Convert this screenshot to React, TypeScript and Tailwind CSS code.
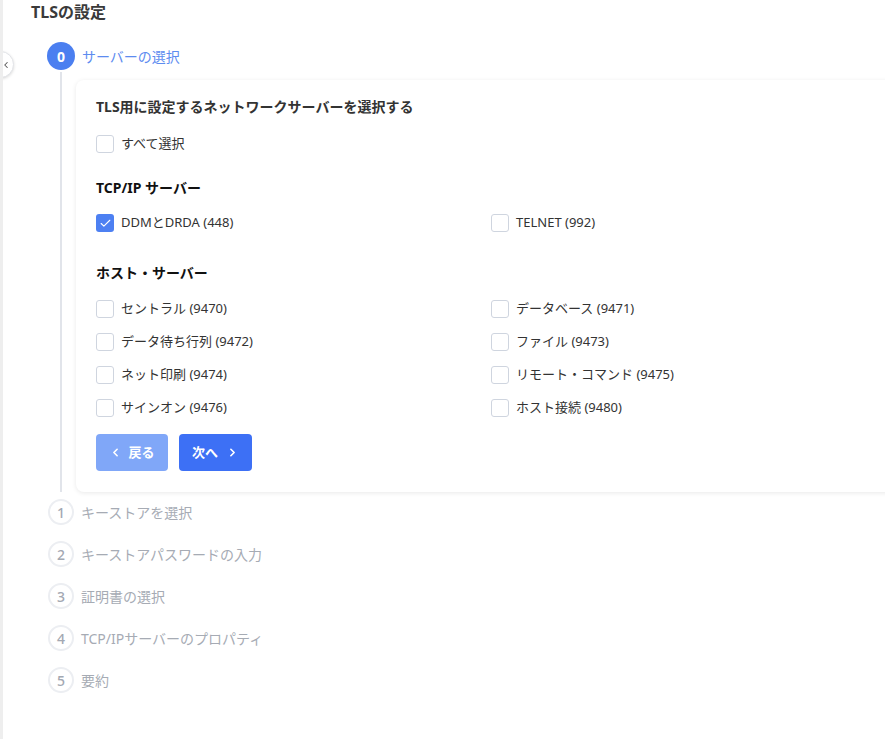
import { Check, ChevronLeft, ChevronRight } from "lucide-react";

const font = { fontFamily: '"Noto Sans", "Noto Sans CJK JP", sans-serif' };

const hostServers: [string, string][] = [
  ["セントラル (9470)", "データベース (9471)"],
  ["データ待ち行列 (9472)", "ファイル (9473)"],
  ["ネット印刷 (9474)", "リモート・コマンド (9475)"],
  ["サインオン (9476)", "ホスト接続 (9480)"],
];

const steps = [
  { n: 1, label: "キーストアを選択" },
  { n: 2, label: "キーストアパスワードの入力" },
  { n: 3, label: "証明書の選択" },
  { n: 4, label: "TCP/IPサーバーのプロパティ" },
  { n: 5, label: "要約" },
];

function Box({ label, checked = false }: { label: string; checked?: boolean }) {
  return (
    <label className="flex items-center gap-[7px] h-[20px] text-[13px] text-[#333]">
      {checked ? (
        <span className="w-[18px] h-[18px] rounded-[3px] bg-[#4d80f2] flex items-center justify-center">
          <Check className="w-[13px] h-[13px] text-white" strokeWidth={2} />
        </span>
      ) : (
        <span className="w-[18px] h-[18px] rounded-[3px] border border-[#cfd5df] bg-white" />
      )}
      <span>{label}</span>
    </label>
  );
}

export default function App() {
  return (
    <div className="relative w-[885px] h-[739px] overflow-hidden bg-white border-l-[3px] border-[#eeeeee]" style={font}>
      <div className="absolute left-[-16px] top-[51px] w-[27px] h-[27px] rounded-full bg-white border border-[#e2e4e8] shadow-[0_1px_3px_rgba(0,0,0,0.14)] flex items-center justify-end pr-[2px]">
        <ChevronLeft className="w-[10px] h-[10px] text-[#555]" strokeWidth={2.5} />
      </div>

      <h1 className="pl-[28px] pt-[1px] text-[16px] leading-[22px] font-bold text-[#3a3a3a]">TLSの設定</h1>

      <div className="pl-[44px] mt-[19px]">
        <div className="flex items-center gap-[7px] h-[28px]">
          <span className="w-[28px] h-[28px] rounded-full bg-[#4b7ff0] text-white text-[14px] font-bold flex items-center justify-center">
            0
          </span>
          <span className="text-[14px] text-[#5d8cf0]">サーバーの選択</span>
        </div>

        <div className="flex mt-[2px]">
          <div className="w-[28px] flex justify-center shrink-0">
            <div className="w-[2px] bg-[#e1e4ea]" />
          </div>
          <div className="ml-[1px] mt-[8px] w-[840px] shrink-0 bg-white rounded-lg shadow-[0_1px_5px_rgba(0,0,0,0.09)] pl-[20px] pt-[17px] pb-[21px]">
            <h2 className="text-[14px] leading-[20px] font-bold text-[#333]">TLS用に設定するネットワークサーバーを選択する</h2>
            <div className="mt-[17px]">
              <Box label="すべて選択" />
            </div>

            <h3 className="mt-[24px] text-[14px] leading-[20px] font-bold text-[#111]">TCP/IP サーバー</h3>
            <div className="mt-[15px] grid grid-cols-[395px_1fr]">
              <Box label="DDMとDRDA (448)" checked />
              <Box label="TELNET (992)" />
            </div>

            <h3 className="mt-[30px] text-[14px] leading-[20px] font-bold text-[#111]">ホスト・サーバー</h3>
            <div className="mt-[16px] grid grid-cols-[395px_1fr] gap-y-[13px]">
              {hostServers.map(([a, b]) => (
                <div key={a} className="contents">
                  <Box label={a} />
                  <Box label={b} />
                </div>
              ))}
            </div>

            <div className="mt-[16px] flex gap-[11px]">
              <button className="h-[37px] w-[72px] rounded-[4px] bg-[#80a7f8] text-white text-[13px] font-bold flex items-center justify-center gap-[6px]">
                <ChevronLeft className="w-[13px] h-[13px]" strokeWidth={3} />
                戻る
              </button>
              <button className="h-[37px] w-[73px] rounded-[4px] bg-[#3d70f5] text-white text-[13px] font-bold flex items-center justify-center gap-[8px]">
                次へ
                <ChevronRight className="w-[13px] h-[13px]" strokeWidth={3} />
              </button>
            </div>
          </div>
        </div>

        <div className="mt-[7px] flex flex-col gap-[16px] pl-[1px]">
          {steps.map((s) => (
            <div key={s.n} className="flex items-center gap-[7px] h-[26px]">
              <span className="w-[26px] h-[26px] rounded-full border-2 border-[#eceef2] text-[#a3a8b2] text-[14px] font-medium flex items-center justify-center">
                {s.n}
              </span>
              <span className="text-[14px] text-[#a6abb4]">{s.label}</span>
            </div>
          ))}
        </div>
      </div>
    </div>
  );
}
